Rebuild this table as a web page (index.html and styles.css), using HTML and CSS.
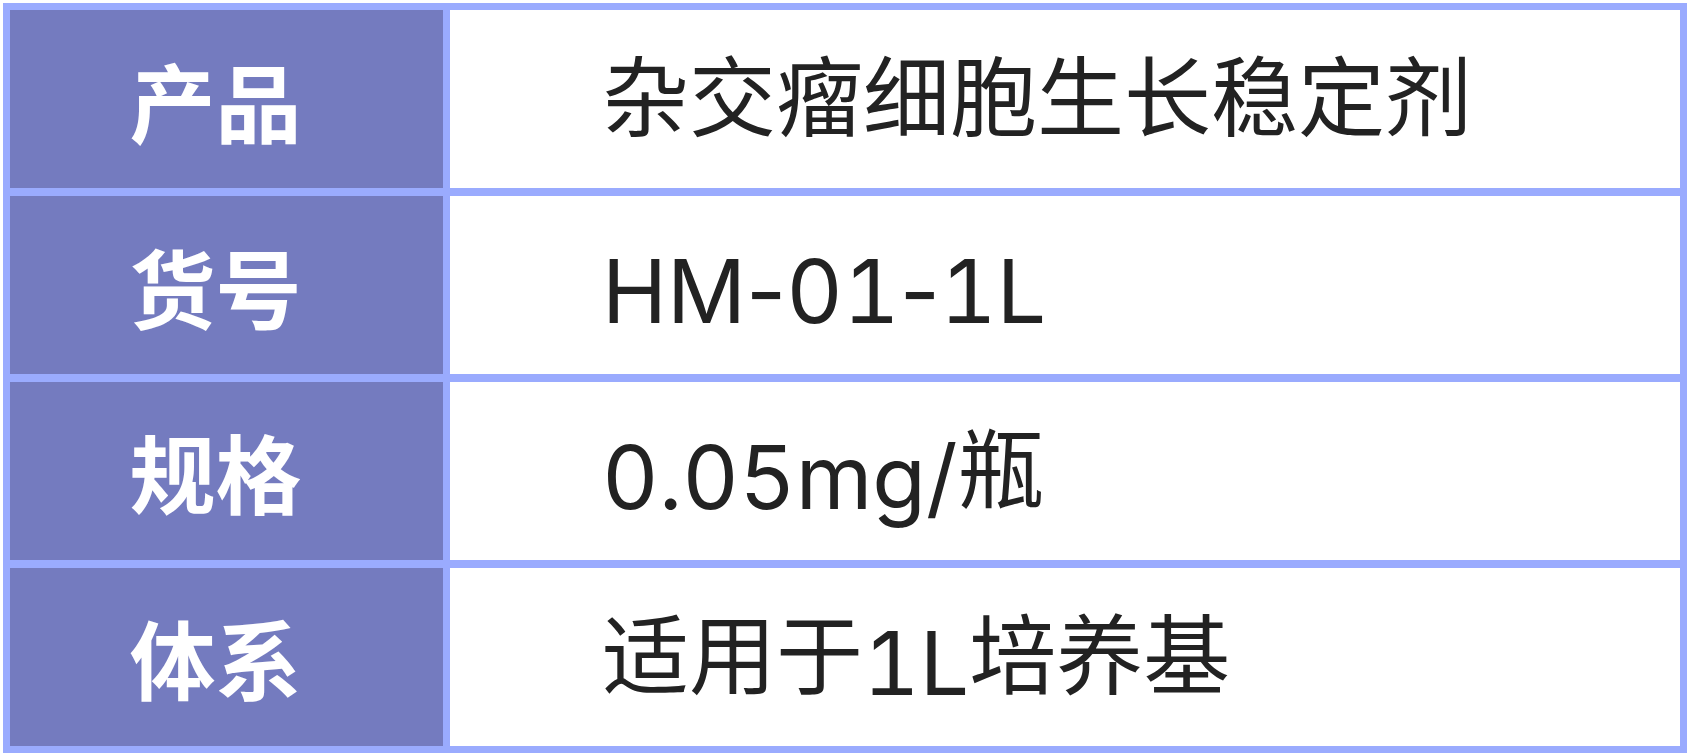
FILE: index.html
```html
<!DOCTYPE html>
<html lang="zh-CN">
<head>
<meta charset="utf-8">
<title>产品信息</title>
<link rel="stylesheet" href="styles.css">
</head>
<body>
<div class="page">
  <div class="spec-table">
    <div class="label">产品</div>
    <div class="value"><span class="txt">杂交瘤细胞生长稳定剂</span></div>
    <div class="label">货号</div>
    <div class="value"><span class="txt"><span class="lat">HM<span class="dash">-</span>01<span class="dash">-</span>1L</span></span></div>
    <div class="label">规格</div>
    <div class="value"><span class="txt"><span class="lat">0.05mg/</span>瓶</span></div>
    <div class="label">体系</div>
    <div class="value"><span class="txt">适用于<span class="lat">1L</span>培养基</span></div>
  </div>
</div>
</body>
</html>
```

FILE: styles.css
```css
html, body {
  margin: 0;
  padding: 0;
  background: #ffffff;
}

.page {
  padding: 3px 2px 1px 3px;
  width: 1689px;
  height: 754px;
  box-sizing: border-box;
}

.spec-table {
  display: grid;
  grid-template-columns: 433px 1fr;
  grid-template-rows: repeat(4, 1fr);
  gap: 7.5px 7px;
  padding: 7px;
  background: #9aabfe;
  height: 100%;
  box-sizing: border-box;
}

.label {
  background: #747bbf;
  color: #ffffff;
  font-family: "Noto Sans CJK SC", sans-serif;
  font-weight: 700;
  font-size: 86px;
  display: flex;
  align-items: center;
  justify-content: center;
  padding-right: 22px;
}

.value {
  background: #ffffff;
  color: #222222;
  font-family: Inter, "Noto Sans CJK SC", sans-serif;
  font-weight: 400;
  font-size: 87px;
  display: flex;
  align-items: center;
  padding-left: 152px;
}

.txt {
  line-height: 1.2;
  white-space: nowrap;
}

.lat {
  font-size: 87.5px;
  font-variant-numeric: tabular-nums;
  line-height: 0;
  vertical-align: -7px;
}

.dash {
  font-variant-numeric: normal;
}
```
